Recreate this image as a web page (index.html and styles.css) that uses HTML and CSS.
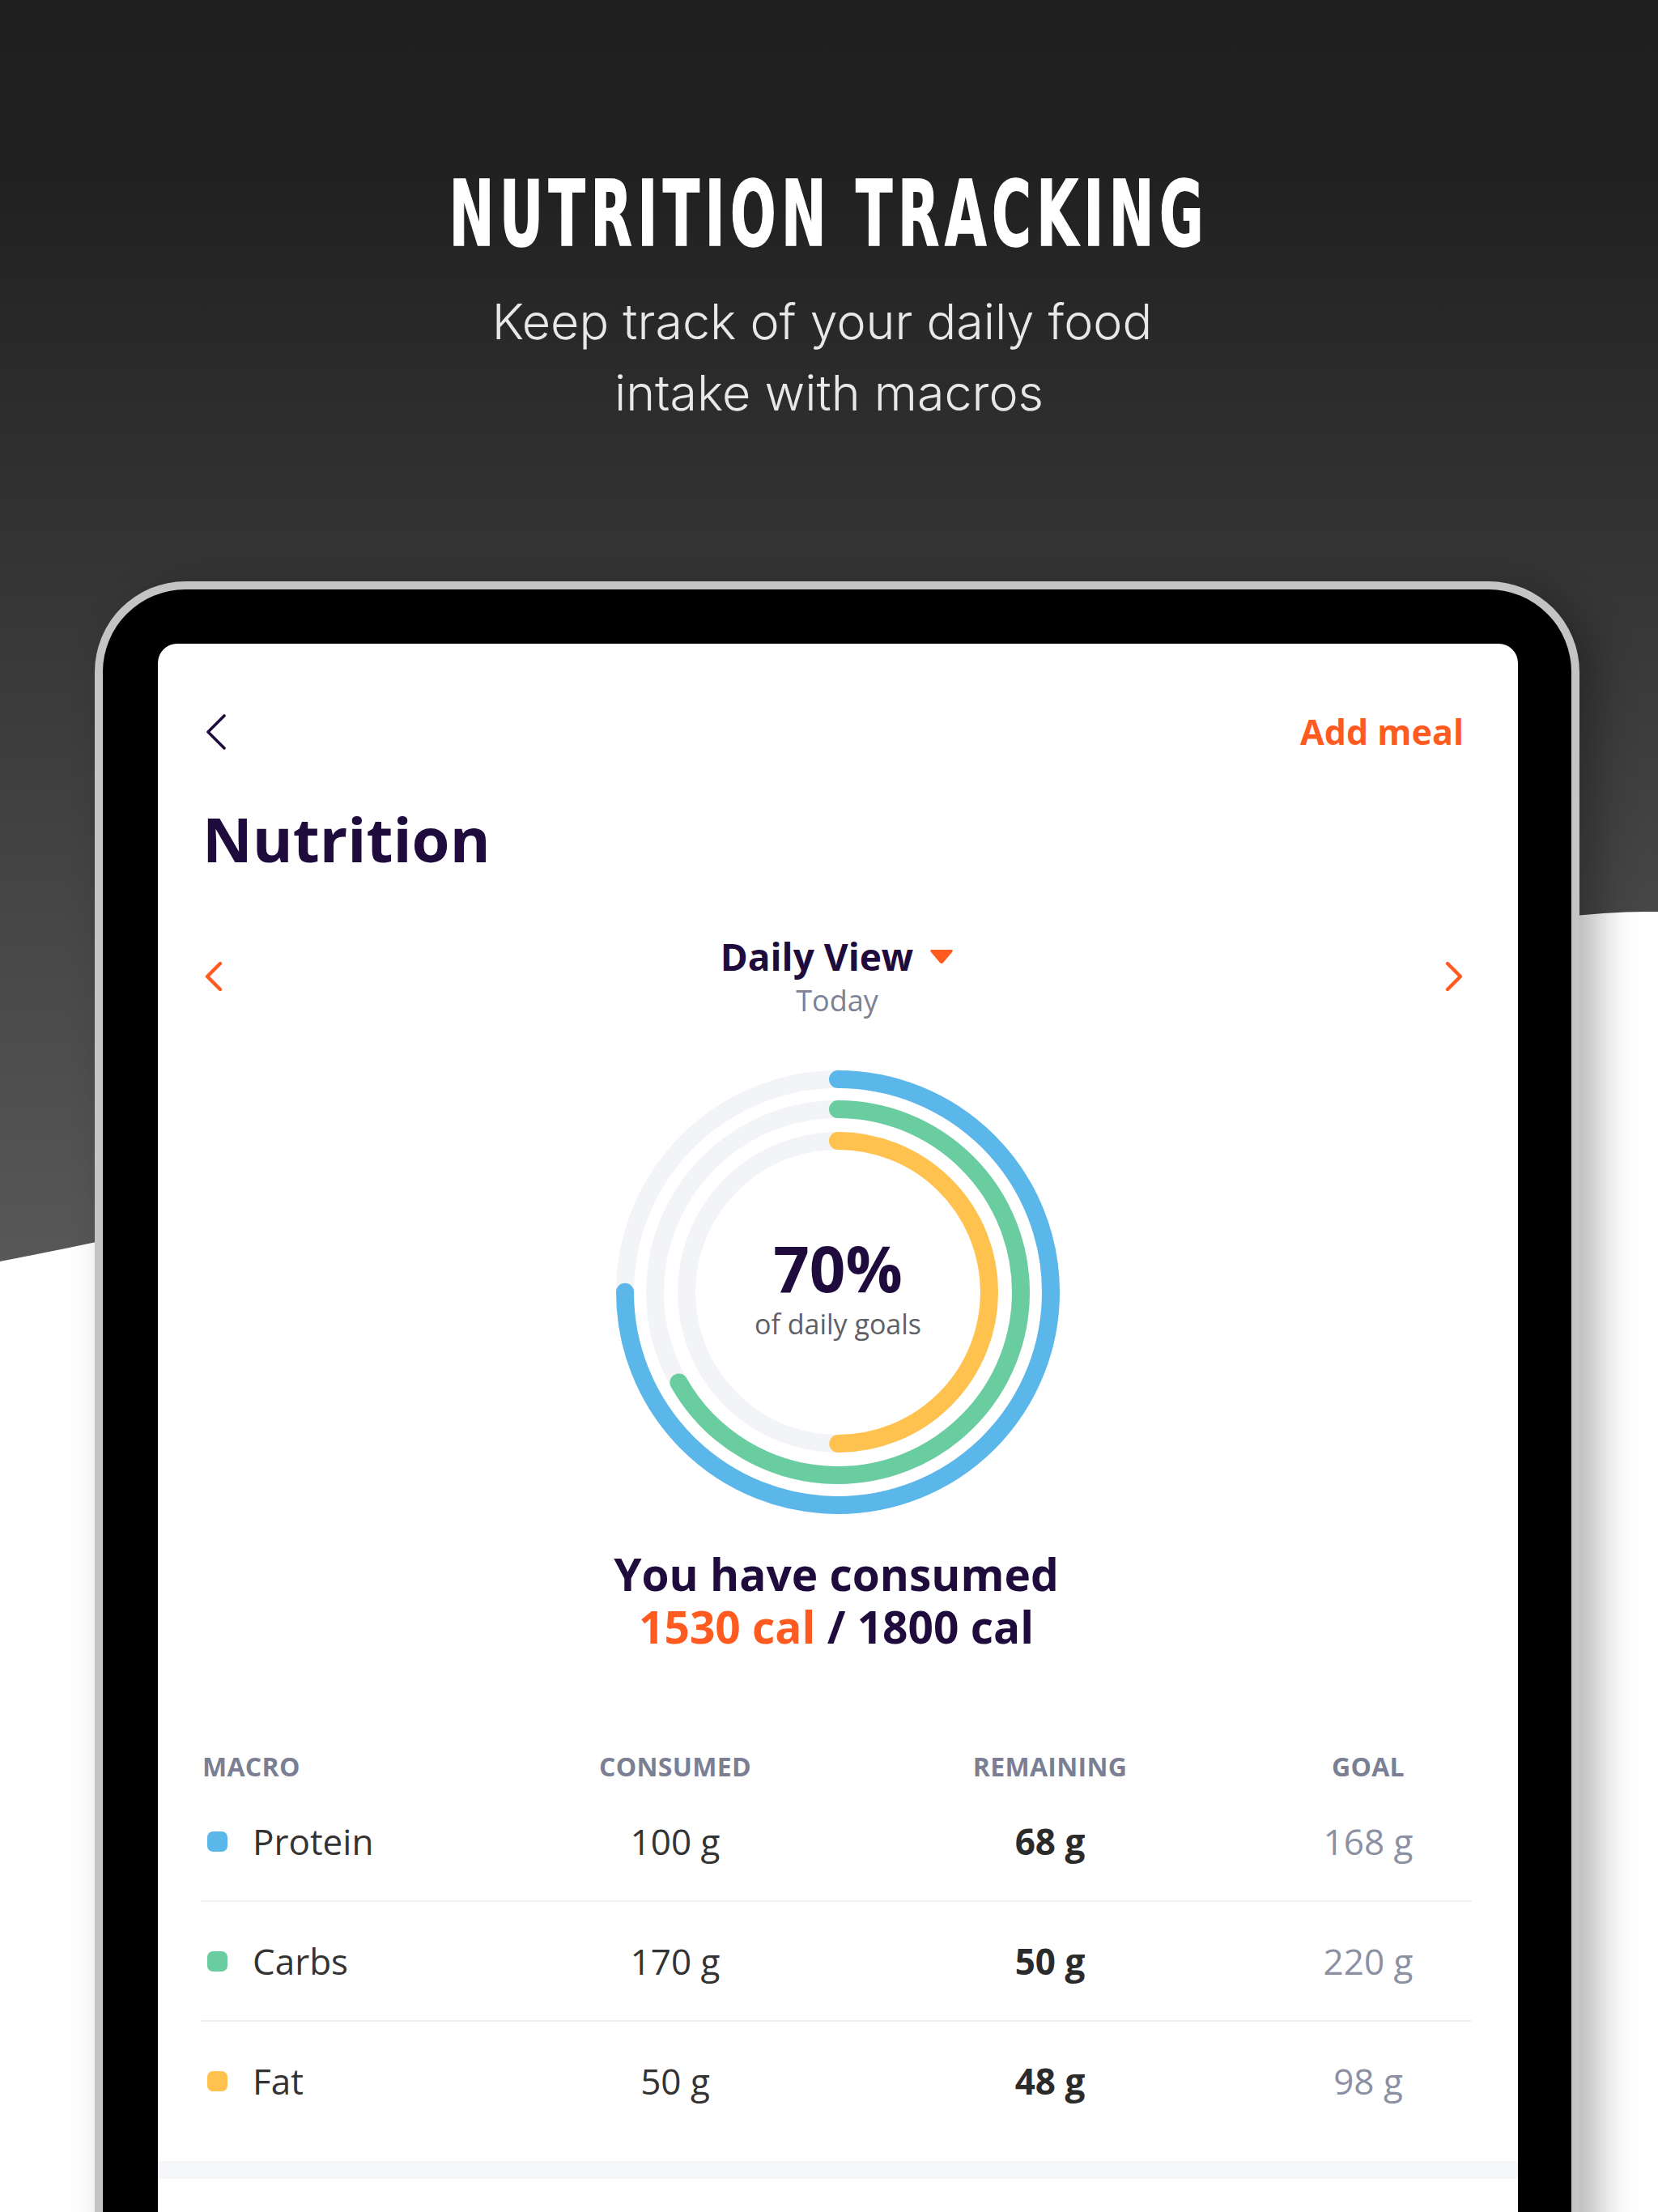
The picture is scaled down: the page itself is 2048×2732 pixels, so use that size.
FILE: index.html
```html
<!DOCTYPE html>
<html lang="en">
<head>
  <meta charset="UTF-8">
  <meta name="viewport" content="width=device-width, initial-scale=1.0">
  <title>Nutrition Tracking</title>
  <link rel="stylesheet" href="styles.css">
</head>
<body>
  <!-- white wave behind the device -->
  <svg class="backdrop" viewBox="0 0 2048 2732" preserveAspectRatio="none" aria-hidden="true">
    <path d="M0 1558 C700 1422 1700 1120 2048 1126 L2048 2732 L0 2732 Z" fill="#fff"/>
  </svg>

  <header class="hero">
    <h1><span>NUTRITION TRACKING</span></h1>
    <p>Keep track of your daily food&nbsp;<br>intake with macros</p>
  </header>

  <div class="tablet">
    <main class="screen">
      <div class="topbar">
        <svg class="back" width="26" height="44" viewBox="0 0 26 44">
          <path d="M23 2 L3 22 L23 42" fill="none" stroke="#1f0c3d" stroke-width="3.6" stroke-linecap="round" stroke-linejoin="round"/>
        </svg>
        <a class="add-meal" href="#">Add meal</a>
      </div>

      <h2 class="page-title">Nutrition</h2>

      <div class="period">
        <svg class="period-arrow" width="24" height="40" viewBox="0 0 24 40">
          <path d="M20 4 L4 20 L20 36" fill="none" stroke="#ff5a1f" stroke-width="4.4" stroke-linecap="round" stroke-linejoin="round"/>
        </svg>
        <div class="period-label">
          <div class="period-name">
            Daily View
            <svg width="30" height="19" viewBox="0 0 30 19">
              <path d="M3 1 H27 Q30 1 28 4 L17 17 Q15 19 13 17 L2 4 Q0 1 3 1 Z" fill="#ff5a1f"/>
            </svg>
          </div>
          <div class="period-date">Today</div>
        </div>
        <svg class="period-arrow" width="24" height="40" viewBox="0 0 24 40">
          <path d="M4 4 L20 20 L4 36" fill="none" stroke="#ff5a1f" stroke-width="4.4" stroke-linecap="round" stroke-linejoin="round"/>
        </svg>
      </div>

      <div class="rings">
        <svg width="560" height="560" viewBox="0 0 560 560">
          <g fill="none" stroke-width="22">
            <circle cx="280" cy="280" r="263" stroke="#f3f4f8"/>
            <circle cx="280" cy="280" r="226" stroke="#f3f4f8"/>
            <circle cx="280" cy="280" r="187" stroke="#f3f4f8"/>
            <g transform="rotate(-90 280 280)" stroke-linecap="round">
              <!-- protein, carbs, fat -->
              <circle cx="280" cy="280" r="263" stroke="#5bb7ea" stroke-dasharray="1239 2000"/>
              <circle cx="280" cy="280" r="226" stroke="#69cd9f" stroke-dasharray="948 2000"/>
              <circle cx="280" cy="280" r="187" stroke="#ffc24f" stroke-dasharray="587 2000"/>
            </g>
          </g>
        </svg>
        <div class="rings-center">
          <strong>70%</strong>
          <span>of daily goals</span>
        </div>
      </div>

      <p class="summary">You have consumed<br><span class="eaten">1530 cal</span> / 1800 cal</p>

      <div class="macros">
        <div class="macro-row macro-head">
          <span>MACRO</span>
          <span>CONSUMED</span>
          <span>REMAINING</span>
          <span>GOAL</span>
        </div>
        <div class="macro-row">
          <span class="macro-name"><i class="dot protein"></i>Protein</span>
          <span>100 g</span>
          <span class="left">68 g</span>
          <span class="goal">168 g</span>
        </div>
        <div class="macro-row">
          <span class="macro-name"><i class="dot carbs"></i>Carbs</span>
          <span>170 g</span>
          <span class="left">50 g</span>
          <span class="goal">220 g</span>
        </div>
        <div class="macro-row">
          <span class="macro-name"><i class="dot fat"></i>Fat</span>
          <span>50 g</span>
          <span class="left">48 g</span>
          <span class="goal">98 g</span>
        </div>
      </div>

      <div class="band"></div>
    </main>
  </div>
</body>
</html>
```

FILE: styles.css
```css
* {
  margin: 0;
  padding: 0;
  box-sizing: border-box;
}

body {
  position: relative;
  width: 2048px;
  height: 2732px;
  overflow: hidden;
  background: linear-gradient(to bottom, #1f1f1f 0, #202020 200px, #585858 1560px);
  font-family: 'Open Sans', 'Noto Sans', sans-serif;
}

.backdrop {
  position: absolute;
  top: 0;
  left: 0;
  width: 2048px;
  height: 2732px;
}

/* Heading above the device */
.hero {
  position: relative;
  padding-top: 208px;
  text-align: center;
  color: #fff;
}

.hero h1 {
  font-family: 'DejaVu Sans Condensed', 'DejaVu Sans', sans-serif;
  font-weight: 700;
  font-size: 112px;
  line-height: 112px;
  letter-spacing: 10px;
}

.hero h1 span {
  display: inline-block;
  transform: scaleX(0.66);
  -webkit-text-stroke: 1.5px #fff;
}

.hero p {
  margin-top: 33px;
  font-family: 'Inter', sans-serif;
  font-size: 61px;
  line-height: 88px;
  font-weight: 300;
  color: #e8e8e8;
}

/* Device frame */
.tablet {
  position: relative;
  width: 1834px;
  margin: 189px 0 0 117px;
  padding: 67px 66px 0 68px;
  background: #000;
  border: 10px solid #c4c4c4;
  border-bottom: none;
  border-radius: 112px 112px 0 0;
  box-shadow: 22px 10px 50px rgba(0, 0, 0, 0.3);
}

.screen {
  background: #fff;
  border-radius: 24px 24px 0 0;
  padding: 87px 67px 300px 55px;
  color: #1f0c3d;
}

.topbar {
  height: 44px;
  display: flex;
  justify-content: space-between;
  align-items: center;
}

.back {
  margin-left: 4px;
}

.add-meal {
  font-size: 43px;
  line-height: 44px;
  font-weight: 700;
  color: #ff5a1f;
  text-decoration: none;
}

.page-title {
  margin-top: 71px;
  font-size: 76px;
  line-height: 78px;
  font-weight: 700;
}

/* Day switcher */
.period {
  margin-top: 79px;
  display: flex;
  justify-content: space-between;
  align-items: center;
}

.period-arrow:first-child {
  margin-left: 2px;
}

.period-label {
  padding-left: 8px;
  text-align: center;
}

.period-name {
  display: flex;
  justify-content: center;
  align-items: center;
  gap: 20px;
  font-size: 46px;
  line-height: 55px;
  font-weight: 700;
}

.period-date {
  margin-top: 5px;
  font-size: 36px;
  line-height: 43px;
  color: #7d8196;
}

/* Macro rings */
.rings {
  margin-top: 59px;
  padding-left: 12px;
  display: grid;
  place-items: center;
}

.rings > * {
  grid-area: 1 / 1;
}

.rings-center {
  display: flex;
  flex-direction: column;
  align-items: center;
  margin-bottom: 10px;
}

.rings-center strong {
  font-size: 78px;
  line-height: 78px;
  font-weight: 700;
}

.rings-center span {
  margin-top: 10px;
  font-size: 34px;
  line-height: 41px;
  color: #5f5f66;
}

.summary {
  margin-top: 35px;
  padding-left: 8px;
  text-align: center;
  font-size: 55px;
  line-height: 65px;
  font-weight: 700;
}

.eaten {
  color: #ff5a1f;
}

/* Macro table */
.macros {
  margin: 122px -10px 0 -2px;
}

.macro-row {
  display: grid;
  grid-template-columns: 388px 396px 530px 256px;
  align-items: center;
  padding: 43px 0;
  font-size: 44px;
  line-height: 60px;
  color: #333;
  border-bottom: 2px solid #f0f1f5;
}

.macro-row:last-child {
  border-bottom: none;
}

.macro-row span {
  text-align: center;
}

.macro-row .macro-name {
  display: flex;
  align-items: center;
  text-align: left;
}

.macro-head {
  padding: 0;
  border-bottom: none;
  font-size: 32px;
  line-height: 38px;
  font-weight: 700;
  letter-spacing: 0.3px;
  color: #7b7f94;
}

.macro-head span:first-child {
  text-align: left;
  padding-left: 2px;
}

.dot {
  width: 25px;
  height: 25px;
  margin: 0 31px 0 8px;
  border-radius: 7px;
}

.dot.protein { background: #5bb7ea; }
.dot.carbs { background: #69cd9f; }
.dot.fat { background: #ffc24f; }

.macro-row .left {
  font-weight: 700;
  color: #2b2b2b;
}

.macro-row .goal {
  color: #8c90a3;
}

.band {
  margin: 26px -67px 0 -55px;
  height: 22px;
  background: #f5f6fa;
}
```
